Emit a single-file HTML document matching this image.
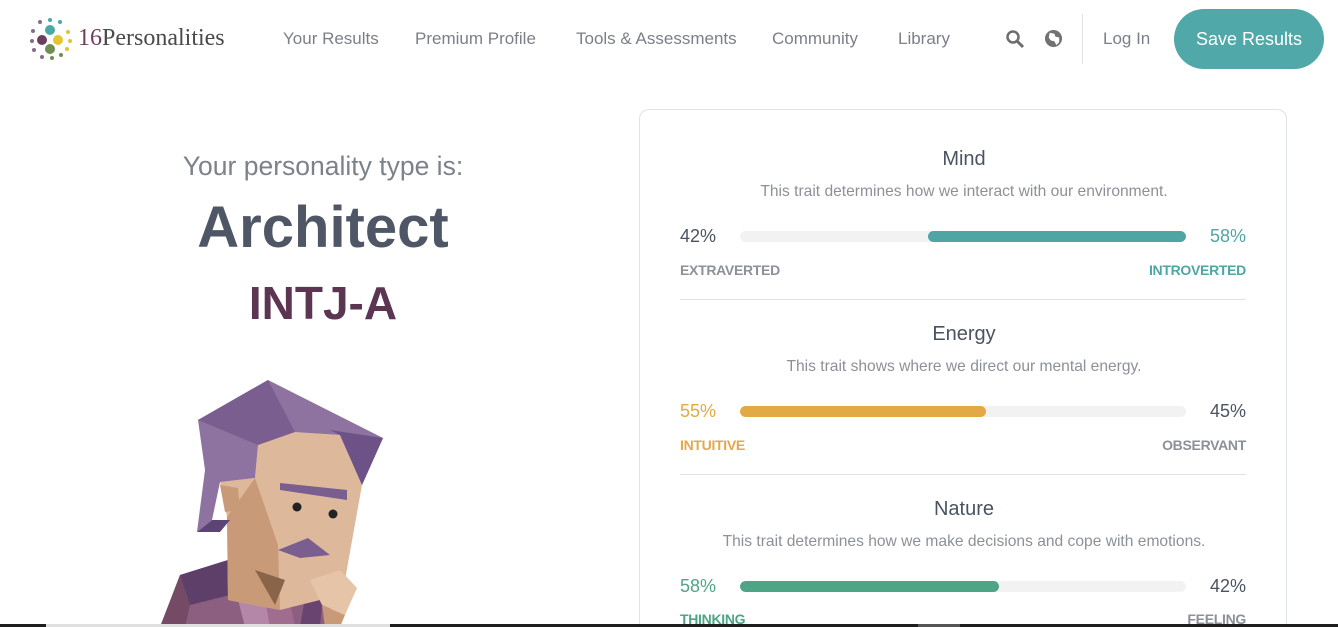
<!DOCTYPE html>
<html><head><meta charset="utf-8"><style>
*{box-sizing:border-box;margin:0;padding:0}
html,body{width:1338px;height:627px;overflow:hidden}
body{background:#fff;font-family:"Liberation Sans",sans-serif;position:relative;color:#576071}
.nav a{position:absolute;top:29px;font-size:17px;color:#7b7f87;text-decoration:none}
.btn{position:absolute;left:1174px;top:9px;width:150px;height:60px;border-radius:30px;background:#51a8a9;color:#fff;font-size:18px;text-align:center;line-height:60px}
.card{position:absolute;left:639px;top:109px;width:648px;height:540px;border:1px solid #dfe2e6;border-radius:10px}
.t{position:absolute;left:0;width:648px;text-align:center}
.h{font-size:20px;color:#4a5362}
.d{font-size:15.6px;color:#8c9098}
.pct{position:absolute;font-size:18px}
.lab{position:absolute;font-size:14px;font-weight:bold;letter-spacing:-.3px}
.bar{position:absolute;left:100px;width:446px;height:11px;border-radius:6px;background:#f2f2f3;overflow:hidden}
.bar i{position:absolute;top:0;height:11px;border-radius:6px}
.hr{position:absolute;left:40px;width:566px;border-top:1px solid #dfe2e6}
</style></head><body>
<svg style="position:absolute;left:28px;top:17px" width="46" height="44" viewBox="0 0 46 44">
<g fill="#8a6a88"><circle cx="12" cy="5" r="2"/><circle cx="22" cy="3" r="2" fill="#4aa8a8"/><circle cx="32" cy="5" r="2" fill="#4aa8a8"/><circle cx="5" cy="14" r="2"/><circle cx="4" cy="24" r="2"/><circle cx="6" cy="33" r="2"/><circle cx="14" cy="40" r="2"/><circle cx="24" cy="41" r="2" fill="#6f8f52"/><circle cx="33" cy="38" r="2" fill="#6f8f52"/><circle cx="40" cy="15" r="2" fill="#e0c434"/><circle cx="42" cy="24" r="2" fill="#e0c434"/><circle cx="39" cy="32" r="2" fill="#e0c434"/></g>
<circle cx="22" cy="13" r="5" fill="#4aa8a8"/><circle cx="14" cy="23" r="5" fill="#6a3f5e"/><circle cx="30" cy="23" r="5" fill="#e3c52f"/><circle cx="22" cy="32" r="5" fill="#6f8f52"/></svg>
<div style="position:absolute;left:78px;top:25px;font-family:'Liberation Serif',serif;font-size:24px;color:#4a4a4a"><span style="color:#6a3f5e">16</span>Personalities</div>
<div class="nav"><a style="left:283px">Your Results</a><a style="left:415px">Premium Profile</a><a style="left:576px">Tools &amp; Assessments</a><a style="left:772px">Community</a><a style="left:898px">Library</a><a style="left:1103px">Log In</a></div>
<svg style="position:absolute;left:1005px;top:29px" width="20" height="20" viewBox="0 0 20 20"><circle cx="8" cy="8" r="5.5" fill="none" stroke="#6d6d6d" stroke-width="2.5"/><path d="M12 12l6 6" stroke="#6d6d6d" stroke-width="3"/></svg>
<svg style="position:absolute;left:1044px;top:29px" width="19" height="19" viewBox="0 0 20 20"><circle cx="10" cy="10" r="9" fill="#727272"/><path d="M6 4l5 1 1 3 4 1 0 5-3 3-2-4-4-1-2-3z" fill="#fff"/></svg>
<div style="position:absolute;left:1082px;top:14px;height:50px;border-left:1px solid #dfe2e6"></div>
<div class="btn">Save Results</div>
<div style="position:absolute;left:0;width:646px;top:151px;text-align:center;font-size:26.5px;color:#7c818a">Your personality type is:</div>
<div style="position:absolute;left:0;width:646px;top:194px;text-align:center;font-size:58px;font-weight:bold;color:#4f5766">Architect</div>
<div style="position:absolute;left:0;width:646px;top:276px;text-align:center;font-size:46px;font-weight:bold;color:#5c3552">INTJ-A</div>
<svg style="position:absolute;left:150px;top:370px" width="260" height="257" viewBox="0 0 260 257">
<polygon points="10,257 30,205 78,190 160,198 190,257" fill="#8c5f80"/>
<polygon points="30,205 78,190 80,225 40,235" fill="#5e3f6a"/>
<polygon points="78,190 110,200 120,257 95,257" fill="#b487a8"/>
<polygon points="110,200 135,205 145,257 120,257" fill="#a06d8f"/>
<polygon points="160,198 175,205 170,257 150,257" fill="#6a4470"/>
<polygon points="10,257 30,205 40,235 35,257" fill="#744a64"/>
<polygon points="108,75 143,62 190,65 212,115 195,210 170,230 130,240 78,230 77,147 70,112 105,108" fill="#deb89b"/>
<polygon points="77,147 105,108 128,175 130,240 78,230" fill="#c99a78"/>
<polygon points="105,200 135,210 125,235" fill="#8a6448"/>
<polygon points="48,50 118,10 233,68 212,115 190,65 143,62 108,75 105,108 70,112 62,150 47,162 55,100" fill="#8e72a0"/>
<polygon points="48,50 118,10 145,62 108,75" fill="#7a5e90"/>
<polygon points="180,60 233,68 212,115 190,65" fill="#6d5288"/>
<polygon points="47,162 62,150 80,150 70,162" fill="#5d4477"/>
<polygon points="70,115 88,118 90,140 75,142" fill="#c99a78"/>
<polygon points="130,113 197,120 197,130 130,120" fill="#7a5e90"/>
<polygon points="128,180 158,168 180,185 150,188" fill="#7a5e90"/>
<circle cx="147" cy="137" r="4.5" fill="#222"/><circle cx="183" cy="144" r="4.5" fill="#222"/>
<polygon points="160,210 190,200 207,218 195,245 172,235" fill="#e6c4a8"/>
<polygon points="172,235 195,245 190,257 175,257" fill="#c99a78"/>
</svg>
<div class="card">
<div class="t h" style="top:38px">Mind</div><div class="t d" style="top:73px">This trait determines how we interact with our environment.</div>
<div class="pct" style="left:40px;top:116px;color:#4a5362">42%</div><div class="pct" style="right:40px;top:116px;color:#4fa4a4">58%</div>
<div class="bar" style="top:121px"><i style="left:188px;width:258px;background:#4fa4a4"></i></div>
<div class="lab" style="left:40px;top:152px;color:#8c9098">EXTRAVERTED</div><div class="lab" style="right:40px;top:152px;color:#4fa4a4">INTROVERTED</div>
<div class="hr" style="top:189px"></div>
<div class="t h" style="top:213px">Energy</div><div class="t d" style="top:248px">This trait shows where we direct our mental energy.</div>
<div class="pct" style="left:40px;top:291px;color:#e2a945">55%</div><div class="pct" style="right:40px;top:291px;color:#4a5362">45%</div>
<div class="bar" style="top:296px"><i style="left:0;width:246px;background:#e2a945"></i></div>
<div class="lab" style="left:40px;top:327px;color:#e2a945">INTUITIVE</div><div class="lab" style="right:40px;top:327px;color:#8c9098">OBSERVANT</div>
<div class="hr" style="top:364px"></div>
<div class="t h" style="top:388px">Nature</div><div class="t d" style="top:423px">This trait determines how we make decisions and cope with emotions.</div>
<div class="pct" style="left:40px;top:466px;color:#4ea585">58%</div><div class="pct" style="right:40px;top:466px;color:#4a5362">42%</div>
<div class="bar" style="top:471px"><i style="left:0;width:259px;background:#4ea585"></i></div>
<div class="lab" style="left:40px;top:501px;color:#4ea585">THINKING</div><div class="lab" style="right:40px;top:501px;color:#8c9098">FEELING</div>
</div>
<div style="position:absolute;left:0;top:624px;width:1338px;height:3px;background:#1e1e1e"></div>
<div style="position:absolute;left:46px;top:624px;width:344px;height:3px;background:#e0e0e0"></div>
<div style="position:absolute;left:918px;top:624px;width:42px;height:3px;background:#555"></div>
</body></html>
